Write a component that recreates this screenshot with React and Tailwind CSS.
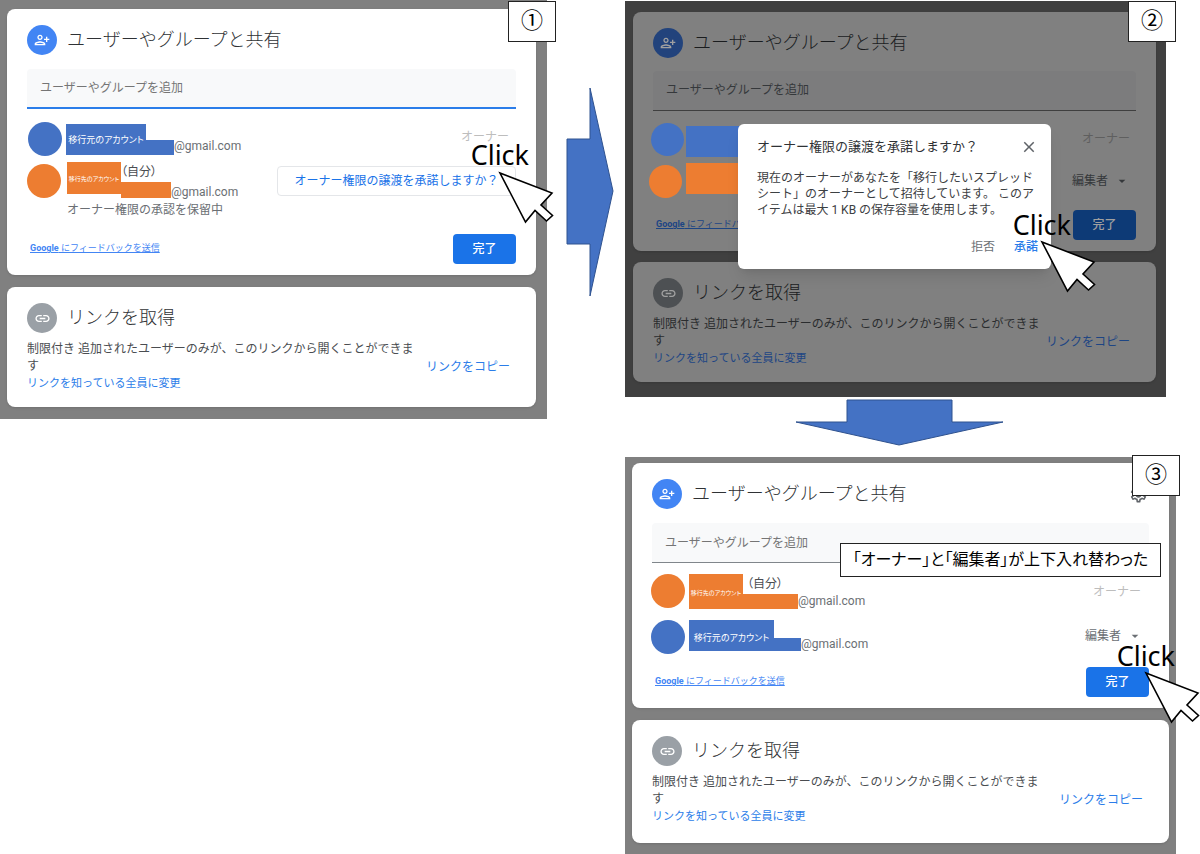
import React from "react";
import { MdArrowDropDown, MdClose, MdLink, MdOutlineSettings } from "react-icons/md";

const light = {
  card: "bg-white shadow-sm",
  title: "text-[#2f3235]",
  body: "text-[#4a4d51]",
  icon: "bg-[#4285f4] text-white",
  linkIcon: "bg-[#9aa0a6] text-white",
  link: "text-[#2b7de9]",
  feedback: "text-[#4285f4]",
  owner: "text-[#bdbdbd]",
  muted: "text-[#6b6f74]",
  button: "bg-[#1a73e8] text-white",
};

const dim = {
  card: "bg-[#808080] shadow-sm",
  title: "text-[#1a1c1e]",
  body: "text-[#2a2c2e]",
  icon: "bg-[#22437c] text-[#a0a0a0]",
  linkIcon: "bg-[#4d5053] text-[#a0a0a0]",
  link: "text-[#1d4584]",
  feedback: "text-[#1d4584]",
  owner: "text-[#5f5f5f]",
  muted: "text-[#35383b]",
  button: "bg-[#0d3a76] text-[#a0a0a0]",
};

function PersonAddIcon() {
  return (
    <svg viewBox="0 0 24 24" className="size-4" fill="currentColor" aria-hidden="true">
      <path d="M13 8c0-2.21-1.79-4-4-4S5 5.79 5 8s1.79 4 4 4 4-1.79 4-4zm-2 0c0 1.1-.9 2-2 2s-2-.9-2-2 .9-2 2-2 2 .9 2 2zM1 18v2h16v-2c0-2.66-5.33-4-8-4s-8 1.34-8 4zm2 0c.2-.71 3.3-2 6-2 2.69 0 5.77 1.28 6 2H3zM20 15v-3h3v-2h-3V7h-2v3h-3v2h3v3h2z" />
    </svg>
  );
}

function CardHeader({ icon, iconClass, titleClass, children }) {
  return (
    <div className="flex items-center gap-[10px]">
      <span className={`flex size-[30px] shrink-0 items-center justify-center rounded-full ${iconClass}`}>{icon}</span>
      <h2 className={`text-lg font-light ${titleClass}`}>{children}</h2>
    </div>
  );
}

function ShareCard({ theme, id, inputClass, children }) {
  return (
    <div className={`rounded-lg pt-4 pr-5 pb-[11px] pl-5 ${theme.card}`}>
      <CardHeader icon={<PersonAddIcon />} iconClass={theme.icon} titleClass={theme.title}>
        ユーザーやグループと共有
      </CardHeader>
      <input
        id={id}
        type="text"
        aria-label="ユーザーやグループを追加"
        placeholder="ユーザーやグループを追加"
        className={`block h-10 w-full rounded-t px-[13px] text-xs outline-none ${inputClass}`}
      />
      {children}
    </div>
  );
}

function ShareFooter({ theme, className }) {
  return (
    <div className={`flex items-center justify-between ${className}`}>
      <a href="#feedback" className={`ml-[3px] text-[9px] underline ${theme.feedback}`}>
        <b>Google</b> にフィードバックを送信
      </a>
      <button type="button" className={`h-[30px] w-[63px] rounded text-xs font-medium ${theme.button}`}>
        完了
      </button>
    </div>
  );
}

function LinkCard({ theme, className }) {
  return (
    <div className={`rounded-lg pt-4 pr-[26px] pl-5 ${theme.card} ${className}`}>
      <CardHeader icon={<MdLink className="size-[17px]" />} iconClass={theme.linkIcon} titleClass={theme.title}>
        リンクを取得
      </CardHeader>
      <div className="mt-2 flex items-center justify-between">
        <div>
          <p className={`text-xs leading-[17px] ${theme.body}`}>
            制限付き 追加されたユーザーのみが、このリンクから開くことができま
            <br />す
          </p>
          <a href="#change" className={`block text-[11px] leading-[18px] ${theme.link}`}>
            リンクを知っている全員に変更
          </a>
        </div>
        <button type="button" className={`shrink-0 text-xs ${theme.link}`}>
          リンクをコピー
        </button>
      </div>
    </div>
  );
}

function Account({ avatar, label, labelClass, color, tail, self, selfClass = "", emailClass = "leading-3" }) {
  return (
    <div className="flex items-start">
      <span className={`size-[34px] shrink-0 rounded-full ${color} ${avatar}`} />
      <div className="flex">
        <span
          className={`flex shrink-0 items-center justify-center whitespace-nowrap text-white [font-feature-settings:'palt'] ${color} ${labelClass}`}
        >
          {label}
        </span>
        <div className="flex flex-col justify-end">
          {self && (
            <span
              className={`text-xs whitespace-nowrap text-[#4a4d51] [font-feature-settings:'palt'] ${selfClass}`}
            >
              （自分）
            </span>
          )}
          <div className="flex">
            <span className={`shrink-0 ${color} ${tail}`} />
            <span className={`text-xs text-[#6b6f74] ${emailClass}`}>@gmail.com</span>
          </div>
        </div>
      </div>
    </div>
  );
}

function EditorSelect({ theme }) {
  return (
    <button type="button" className={`flex items-center gap-[6px] text-xs leading-4 ${theme.muted}`}>
      編集者
      <MdArrowDropDown className="size-4" aria-hidden="true" />
    </button>
  );
}

function StepBadge({ className, children }) {
  return (
    <div
      className={`absolute flex h-[41px] w-12 items-center justify-center border border-[#222] bg-white pb-px text-[22px] leading-none text-black ${className}`}
    >
      {children}
    </div>
  );
}

function ClickHint({ textClass, cursorClass }) {
  return (
    <>
      <span className={`absolute font-['Noto_Sans',sans-serif] text-[27px] leading-none text-black ${textClass}`}>
        Click
      </span>
      <svg viewBox="-1 -1 54 51" className={`absolute h-[51px] w-[54px] overflow-visible ${cursorClass}`} aria-hidden="true">
        <path d="M0 0 52 20 41 32 52.5 42.5 46.5 48 35 37.5 25.5 49Z" fill="#fff" stroke="#000" strokeWidth="1.6" />
      </svg>
    </>
  );
}

function TransferDialog({ className }) {
  return (
    <div
      role="dialog"
      aria-labelledby="transfer-title"
      className={`absolute w-[313px] rounded-md bg-white pt-[13px] pr-[13px] pb-[14px] pl-[19px] shadow-lg ${className}`}
    >
      <div className="flex items-center justify-between">
        <h3 id="transfer-title" className="text-[13px] text-[#2f3235]">
          オーナー権限の譲渡を承諾しますか？
        </h3>
        <button type="button" aria-label="閉じる" className="text-[#5f6368]">
          <MdClose className="size-[18px]" />
        </button>
      </div>
      <p className="mt-[13px] text-xs leading-4 whitespace-nowrap text-[#3c4043]">
        現在のオーナーがあなたを「移行したいスプレッド
        <br />
        シート」のオーナーとして招待しています。 このア
        <br />
        イテムは最大 1 KB の保存容量を使用します。
      </p>
      <div className="mt-[21px] flex justify-end gap-[19px] text-xs leading-4">
        <button type="button" className="text-[#6b6f74]">
          拒否
        </button>
        <button type="button" className="font-medium text-[#2b7de9]">
          承諾
        </button>
      </div>
    </div>
  );
}

export default function App() {
  return (
    <main className="grid grid-cols-[547fr_78fr_575fr] items-start overflow-x-hidden bg-white font-['Roboto','Noto_Sans_CJK_JP',sans-serif]">
      <section className="relative bg-[#808080] pt-[9px] pr-[11px] pb-3 pl-[7px]">
        <ShareCard
          theme={light}
          id="add-1"
          inputClass="mt-[14px] border-b-2 border-[#2b7de9] bg-[#f8f9fa] placeholder:text-[#757575]"
        >
          <div className="mt-[13px] flex h-10 items-start justify-between">
            <Account
              color="bg-[#4472c4]"
              avatar="ml-[1px] mr-[4px]"
              label="移行元のアカウント"
              labelClass="mt-[2px] h-[31px] w-20 pt-[2px] text-[9px]"
              tail="h-[15px] w-[28px]"
            />
            <span className={`mt-[7px] mr-[7px] text-xs leading-4 ${light.owner}`}>オーナー</span>
          </div>
          <div className="flex h-9 items-start justify-between">
            <Account
              color="bg-[#ed7d31]"
              avatar="mt-[2px] mr-[6px]"
              label="移行先のアカウント"
              labelClass="h-8 w-[54px] text-[6px]"
              tail="h-4 w-[50px]"
              self
              selfClass="leading-5"
              emailClass="h-4 leading-5"
            />
            <button
              type="button"
              className="mt-1 h-[30px] w-[239px] rounded border border-[#e4e6e9] text-xs text-[#1a73e8]"
            >
              オーナー権限の譲渡を承諾しますか？
            </button>
          </div>
          <p className="mt-1 ml-10 text-xs leading-4 text-[#6b6f74]">オーナー権限の承認を保留中</p>
          <ShareFooter theme={light} className="mt-4" />
        </ShareCard>
        <LinkCard theme={light} className="mt-3 pb-[14px]" />
        <StepBadge className="top-px right-[-9px]">①</StepBadge>
        <ClickHint textClass="top-[141px] right-[18px]" cursorClass="top-[172px] right-[-6px]" />
      </section>

      <div className="pt-[87px] pl-[19px]">
        <svg viewBox="0 0 48 210" className="h-[210px] w-12" aria-hidden="true">
          <path d="M1 52H24V1L47 104 24 209V157H1Z" fill="#4472c4" stroke="#2f528f" />
        </svg>
      </div>

      <div className="pt-px">
        <section className="relative mr-[34px] bg-[#404040] pt-[11px] pr-[10px] pb-[15px] pl-2">
          <ShareCard
            theme={dim}
            id="add-2"
            inputClass="mt-[13px] border-b border-[#3f3f3f] bg-[#7c7c7d] pb-[2px] placeholder:text-[#35383b]"
          >
            <div className="mt-3 flex h-10 items-start justify-between">
              <div className="-ml-[2px] flex items-start gap-[2px]">
                <span className="size-[33px] rounded-full bg-[#4472c4]" />
                <span className="mt-[3px] h-[31px] w-20 bg-[#4472c4]" />
              </div>
              <span className={`mt-2 mr-[6px] text-xs leading-4 ${dim.owner}`}>オーナー</span>
            </div>
            <div className="flex h-9 items-start justify-between">
              <div className="-ml-[4px] flex items-start gap-[4px]">
                <span className="mt-[2px] size-[33px] rounded-full bg-[#ed7d31]" />
                <span className="h-[31px] w-20 bg-[#ed7d31]" />
              </div>
              <div className="mt-[10px] mr-[6px]">
                <EditorSelect theme={dim} />
              </div>
            </div>
            <ShareFooter theme={dim} className="mt-[11px]" />
          </ShareCard>
          <LinkCard theme={dim} className="mt-[11px] pb-[14px]" />
          <TransferDialog className="top-[123px] right-[115px]" />
          <StepBadge className="top-0 right-[-10px]">②</StepBadge>
          <ClickHint textClass="top-[210px] right-[95px]" cursorClass="top-[240px] right-[71px]" />
        </section>

        <svg viewBox="0 0 209 47" className="mt-[2px] ml-[170px] block h-[47px] w-[209px]" aria-hidden="true">
          <path d="M52 1H157V23H208L104 46 1 23H52Z" fill="#4472c4" stroke="#2f528f" />
        </svg>

        <section className="relative mt-[11px] mr-6 bg-[#808080] pt-[6px] pr-[7px] pb-[11px] pl-[7px]">
          <ShareCard
            theme={light}
            id="add-3"
            inputClass="mt-[14px] border-b border-[#80868b] bg-[#f8f9fa] placeholder:text-[#757575]"
          >
            <div className="mt-[11px] flex h-[46px] items-start justify-between">
              <Account
                color="bg-[#ed7d31]"
                avatar="-ml-[1px] mr-[4px]"
                label="移行先のアカウント"
                labelClass="h-[35px] w-[54px] pt-[2px] text-[6px]"
                tail="h-[15px] w-[55px]"
                self
                selfClass="ml-1 leading-5"
                emailClass="leading-[15px]"
              />
              <span className={`mt-[10px] mr-2 text-xs leading-4 ${light.owner}`}>オーナー</span>
            </div>
            <div className="flex h-9 items-start justify-between">
              <Account
                color="bg-[#4472c4]"
                avatar="-ml-[1px] mr-[4px]"
                label="移行元のアカウント"
                labelClass="h-[31px] w-[85px] pt-[6px] text-[9px]"
                tail="h-[13px] w-[27px]"
              />
              <div className="mt-2 mr-[6px]">
                <EditorSelect theme={light} />
              </div>
            </div>
            <ShareFooter theme={light} className="mt-[11px]" />
          </ShareCard>
          <LinkCard theme={light} className="mt-3 pb-[17px]" />
          <MdOutlineSettings className="absolute top-7 right-7 size-[19px] text-[#5f6368]" aria-hidden="true" />
          <StepBadge className="top-[-2px] right-[-4px]">③</StepBadge>
          <p className="absolute top-[86px] right-[15px] flex h-[34px] w-[321px] items-center justify-center border border-[#222] bg-white text-base whitespace-nowrap text-black [font-feature-settings:'palt']">
            「オーナー」と「編集者」が上下入れ替わった
          </p>
          <ClickHint textClass="top-[185px] right-px" cursorClass="top-[215px] right-[-23px]" />
        </section>
      </div>
    </main>
  );
}
